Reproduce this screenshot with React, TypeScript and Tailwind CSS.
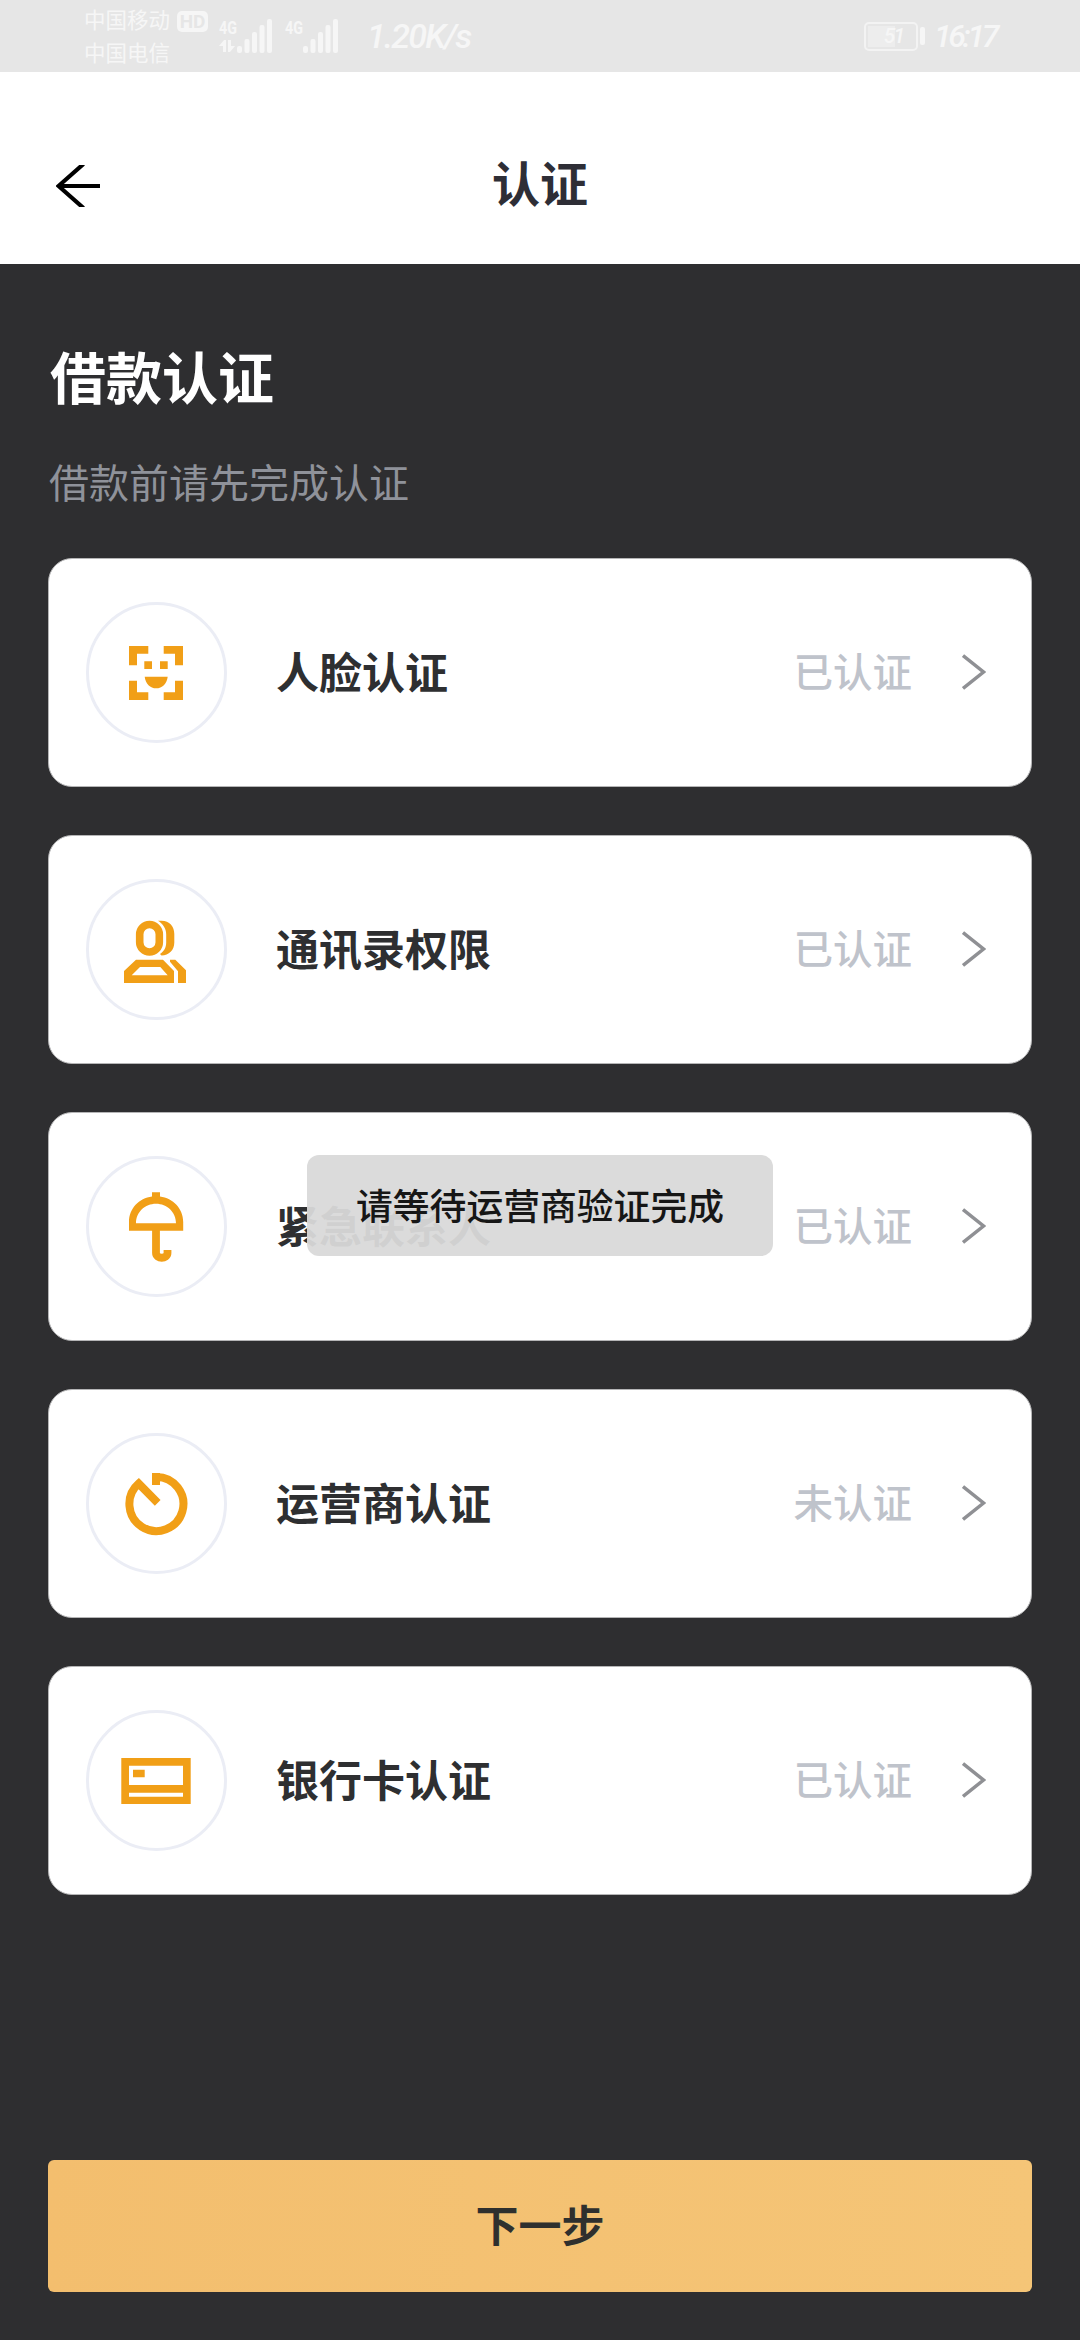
import React from 'react';

interface AuthItem {
  id: string;
  title: string;
  status: string;
  icon: React.ReactNode;
}

const FaceIcon = () => (
  <>
    <path d="M62.3 44v7.7H51v11.6h-8V44zM77.7 44H97v19.3h-8V51.7H77.7zM43 78.7h8v11.6h11.3V98H43zM89 78.7h8V98H77.7v-7.7H89z" />
    <path d="M58.3 59.3H66V67h-7.7zM74 59.3h7.7V67H74zM58.7 74.7h23c-.8 7-5.5 11.6-11.5 11.6s-10.7-4.6-11.5-11.6z" />
  </>
);

const ContactsIcon = () => (
  <>
    <rect x="53.7" y="45.5" width="19.6" height="27.5" rx="9.8" fill="none" stroke="currentColor" strokeWidth="7.6" />
    <path d="M72 41.7h3.5C83.5 41.7 88.3 47.5 88.3 55v8.5c0 7.5-5.3 13-12.8 13l-1.5-1.5c4-2.5 6.2-6.5 6.2-11.5V55.5c0-6-3-10.5-8.2-13.8z" />
    <path fillRule="evenodd" d="M38 104V92l12-11.3h27L88 92v12zM45.7 96.3h36L74.3 88H54z" />
    <path d="M84 80.7h5.3L100 91.3V104h-8V92.3l-8-9.6z" />
  </>
);

const UmbrellaIcon = () => (
  <>
    <path fillRule="evenodd" d="M66 36.3h8v4.2C87 42.3 97.2 52.5 97.2 66v8.7H43V66c0-13.5 10-23.7 23-25.5zM50 67.3h40C90 56 81 47.7 70 47.7S50 56 50 67.3z" />
    <path d="M70 74v23c0 6.3 11.5 6.3 11.5 0v-3" fill="none" stroke="currentColor" strokeWidth="7.8" />
  </>
);

const OperatorIcon = () => (
  <>
    <path d="M70 44A27 27 0 1 1 52.7 50.6L71.7 69.9" fill="none" stroke="currentColor" strokeWidth="8" />
    <path d="M66 40h8v12h-8z" />
  </>
);

const BankCardIcon = () => (
  <path fillRule="evenodd" d="M35.3 48h69.4v46H35.3zM43 55.7V75h54V55.7zM43 82.7v4h54v-4zM47 59.7h11.7v7.6H47z" />
);

const items: AuthItem[] = [
  { id: 'face', title: '人脸认证', status: '已认证', icon: <FaceIcon /> },
  { id: 'contacts', title: '通讯录权限', status: '已认证', icon: <ContactsIcon /> },
  { id: 'emergency', title: '紧急联系人', status: '已认证', icon: <UmbrellaIcon /> },
  { id: 'operator', title: '运营商认证', status: '未认证', icon: <OperatorIcon /> },
  { id: 'bank', title: '银行卡认证', status: '已认证', icon: <BankCardIcon /> },
];

const Signal = ({ active }: { active?: boolean }) => (
  <svg width="53" height="34" viewBox="0 0 53 34" fill="currentColor" className="shrink-0 overflow-visible">
    <text x="0" y="15" fontSize="19" fontWeight="700" textLength="18" lengthAdjust="spacingAndGlyphs">4G</text>
    {active && <path d="M0 27l5-6h2v12H4v-6zM9 21h3v6h4l-5 6H9z" />}
    <rect x="18" y="27" width="5" height="7" rx="2" />
    <rect x="25.5" y="20" width="5" height="14" rx="2" />
    <rect x="33" y="13" width="5" height="21" rx="2" />
    <rect x="40.5" y="6" width="5" height="28" rx="2" />
    <rect x="48" y="0" width="5" height="34" rx="2" />
  </svg>
);

const StatusBar = () => (
  <div className="flex h-[72px] items-center bg-[#e6e6e6] px-[84px] text-[#f6f6f6]">
    <div className="flex w-[135px] flex-col gap-px self-start pt-[5px] text-[21.5px] leading-8">
      <div className="flex items-center gap-[7px] whitespace-nowrap">
        <span>中国移动</span>
        <span className="flex h-[21px] w-[31px] items-center justify-center rounded-[5px] bg-[#f6f6f6] text-[19px] font-bold leading-none text-[#e6e6e6]">HD</span>
      </div>
      <span>中国电信</span>
    </div>
    <Signal active />
    <div className="w-[13px]" />
    <Signal />
    <span className="ml-[29px] w-[110px] whitespace-nowrap text-[34px] font-medium italic tracking-[-1.8px]">1.20K/s</span>
    <div className="ml-auto flex items-center">
      <div className="flex h-[29px] w-[54px] items-center rounded-[5px] border-2 border-[#f3f3f3] p-[2px]">
        <div className="flex h-full w-[27px] items-center justify-end bg-[#ededed]">
          <span className="-mr-2 text-[21px] font-medium italic leading-none tracking-[-2px]">51</span>
        </div>
      </div>
      <div className="ml-[2px] h-[18px] w-[5px] rounded-[2px] bg-[#f6f6f6]" />
      <span className="ml-[9px] w-[62px] whitespace-nowrap text-[32px] font-medium italic tracking-[-3.4px]">16:17</span>
    </div>
  </div>
);

const AuthCard: React.FC<{ item: AuthItem }> = ({ item }) => (
  <li className="flex h-[229px] items-center rounded-[24px] border border-[#b5b5b6] bg-white pl-[37px] pr-[45px]">
    <div className="flex size-[141px] shrink-0 items-center justify-center rounded-full border-3 border-[#ebedf5] text-[#f19f17]">
      <svg width="141" height="141" viewBox="0 0 141 141" fill="currentColor" className="shrink-0">
        {item.icon}
      </svg>
    </div>
    <span className="ml-[49px] pt-[3px] text-[43px] font-bold leading-none text-[#2e2f31]">{item.title}</span>
    <span className="ml-auto pt-[3px] text-[39.5px] font-medium leading-none text-[#bfc3cb]">{item.status}</span>
    <svg width="24" height="36" viewBox="0 0 24 36" fill="none" stroke="#8f9094" strokeWidth="3.5" className="mb-[2px] ml-[50px]">
      <path d="M1 1.5L21.5 18L1 34.5" />
    </svg>
  </li>
);

export default function App() {
  return (
    <div className="relative flex h-[2340px] w-[1080px] flex-col overflow-hidden bg-[#2e2e30] font-[Roboto,'Noto_Sans_CJK_SC',sans-serif]">
      <StatusBar />
      <header className="grid h-[192px] grid-cols-[1fr_auto_1fr] items-center bg-white px-[56px] pt-[36px]">
        <svg width="44" height="42" viewBox="0 0 44 42" fill="none" stroke="#000" strokeWidth="4.2">
          <path d="M27.5 -1L2.5 21L27.5 43M2 21H44" />
        </svg>
        <h1 className="text-[48px] font-bold leading-none text-[#2e2e36]">认证</h1>
      </header>

      <main className="flex flex-1 flex-col px-12 pb-12">
        <h2 className="ml-[2px] mt-[88px] text-[56px] font-bold leading-[56px] text-white">借款认证</h2>
        <p className="ml-px mt-[57px] text-[40px] leading-10 text-[#8f929a]">借款前请先完成认证</p>
        <ul className="mt-[53px] flex flex-col gap-12">
          {items.map(item => (
            <AuthCard key={item.id} item={item} />
          ))}
        </ul>
        <button className="mt-auto h-[132px] rounded-[6px] bg-linear-to-r from-[#f3be6e] to-[#f5c577] pt-[3px] text-[43px] font-bold text-[#2f302e]">
          下一步
        </button>
      </main>

      {/* toast */}
      <div className="absolute left-[307px] top-[1155px] flex h-[101px] w-[466px] items-center justify-center rounded-[12px] bg-[#d9d9d9]/95 pt-[6px] text-[36.8px] font-medium leading-none text-[#161616]">
        请等待运营商验证完成
      </div>
    </div>
  );
}
